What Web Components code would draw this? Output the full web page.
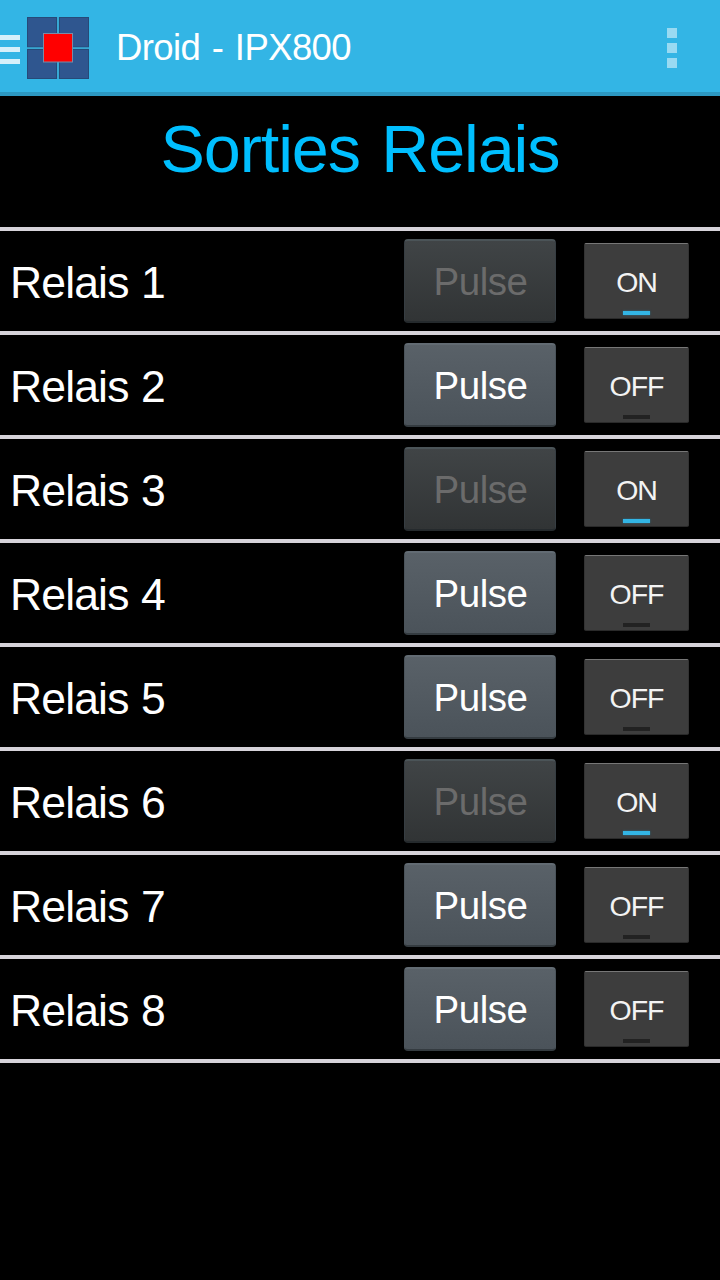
<!DOCTYPE html>
<html lang="fr">
<head>
<meta charset="utf-8">
<title>Droid - IPX800</title>
<style>
html, body { margin: 0; background: #000; }
body { height: 1280px; overflow: hidden; font-family: "Liberation Sans", Arial, sans-serif; color: #fff; }
</style>
</head>
<body>
<relay-app></relay-app>
<script>
function define(name, markup, setup) {
  const t = document.createElement('template');
  t.innerHTML = markup;
  customElements.define(name, class extends HTMLElement {
    constructor() {
      super();
      this.attachShadow({ mode: 'open' }).append(t.content.cloneNode(true));
    }
    connectedCallback() { if (setup) setup(this, this.shadowRoot); }
  });
}

define('app-logo', `
<style>:host{display:block;width:64px;height:64px} svg{display:block}</style>
<svg width="64" height="64" viewBox="0 0 64 64">
  <g fill="#2f568f" stroke="#264a78" stroke-width="1">
    <rect x="1.5" y="1.5" width="29" height="29.5"/><rect x="33.5" y="1.5" width="29" height="29.5"/>
    <rect x="1.5" y="33.5" width="29" height="29"/><rect x="33.5" y="33.5" width="29" height="29"/>
  </g>
  <path d="M32 1V63M1 32.2H63" stroke="#38a6d0" stroke-width="1.6"/>
  <rect x="17.5" y="17.5" width="29" height="28.5" fill="#f00" stroke="#7b8ba6" stroke-width="1"/>
</svg>`);

define('action-bar', `
<style>
:host{display:flex;align-items:center;box-sizing:border-box;height:96px;background:#33b5e5;border-bottom:4px solid #2c98c2}
.drawer{display:grid;gap:7px;width:20px;margin-top:6px}
.drawer i{height:5px;background:#d6f0fa}
app-logo{margin:4px 0 0 6px}
.title{flex:1;margin:4px 0 0 26px;font-size:36.5px;line-height:44px;letter-spacing:-.6px;word-spacing:2px;white-space:nowrap}
.more{display:grid;gap:5px;margin:4px 43px 0 0}
.more i{width:10px;height:10px;background:#99daf2}
</style>
<div class="drawer"><i></i><i></i><i></i></div>
<app-logo></app-logo>
<div class="title"><slot></slot></div>
<div class="more"><i></i><i></i><i></i></div>`);

define('pulse-button', `
<style>
:host{display:flex;align-items:center;justify-content:center;box-sizing:border-box;width:152px;height:84px;border-radius:4px;
background:linear-gradient(#596168,#4b535a);border:1px solid #4b545b;border-top:2px solid #626b73;border-bottom:2px solid #343b40;
font-size:38.5px;letter-spacing:-.5px;line-height:44px}
:host([disabled]){background:linear-gradient(#404446,#313435);border-color:#363d42;border-top-color:#4b5458;border-bottom-color:#252a2d;color:#6b6b6b}
span{padding:1px 0 0 1px}
</style><span><slot></slot></span>`);

define('toggle-button', `
<style>
:host{display:grid;grid-template-rows:1fr 4px;justify-items:center;align-items:center;box-sizing:border-box;width:105px;height:76px;border-radius:2px;
background:#3d3d3d;border:1px solid #333;border-top-color:#777;border-bottom-color:#2a2a2a;padding:1px 0 3px;font-size:28.5px;letter-spacing:-1px;line-height:32px;color:#f3f3f3}
span{padding-top:8px}
i{width:27px;height:4px;background:#222}
:host([on]) i{background:#33b5e5;box-shadow:0 0 2px #287894}
</style><span><slot></slot></span><i></i>`);

define('relay-row', `
<style>
:host{display:flex;align-items:center;box-sizing:border-box;height:104px;border-bottom:4px solid #d6d3da;padding:0 31px 0 10px}
.name{flex:1;padding-top:4px;font-size:44.5px;line-height:52px;letter-spacing:-.85px;word-spacing:1px;white-space:nowrap}
toggle-button{margin-left:28px}
</style>
<div class="name"><slot></slot></div><pulse-button>Pulse</pulse-button><toggle-button></toggle-button>`,
(host, root) => {
  const on = host.hasAttribute('on');
  root.querySelector('pulse-button').toggleAttribute('disabled', on);
  const toggle = root.querySelector('toggle-button');
  toggle.toggleAttribute('on', on);
  toggle.textContent = on ? 'ON' : 'OFF';
});

define('relay-app', `
<style>
:host{display:block;width:720px;height:1280px;background:#000}
h1{box-sizing:border-box;height:131px;margin:0;padding-top:13px;text-align:center;font-size:66.5px;font-weight:400;line-height:80px;letter-spacing:-1.1px;word-spacing:4px;color:#00bfff}
.list{border-top:4px solid #d6d3da}
</style>
<action-bar>Droid - IPX800</action-bar>
<h1>Sorties Relais</h1>
<div class="list">
<relay-row on>Relais 1</relay-row><relay-row>Relais 2</relay-row><relay-row on>Relais 3</relay-row><relay-row>Relais 4</relay-row>
<relay-row>Relais 5</relay-row><relay-row on>Relais 6</relay-row><relay-row>Relais 7</relay-row><relay-row>Relais 8</relay-row>
</div>`);
</script>
</body>
</html>
